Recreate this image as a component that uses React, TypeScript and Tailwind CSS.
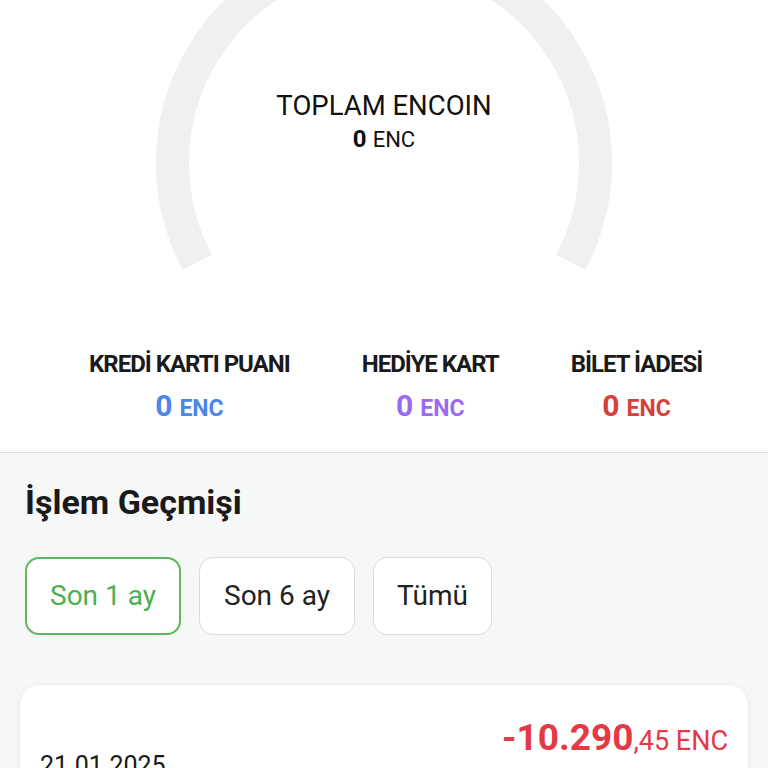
import React from "react";

const cx = 384;
const cy = 163;
const r = 211.5;
const a = (28 * Math.PI) / 180;
const lx = cx - r * Math.cos(a);
const ly = cy + r * Math.sin(a);
const rx = cx + r * Math.cos(a);

function Gauge() {
  return (
    <svg className="absolute left-0 top-0" width="768" height="320" viewBox="0 0 768 320">
      <path
        d={`M ${lx} ${ly} A ${r} ${r} 0 1 1 ${rx} ${ly}`}
        fill="none"
        stroke="#eef1f0"
        strokeWidth="33"
      />
    </svg>
  );
}

function Stat({ label, color }: { label: string; color: string }) {
  return (
    <div className="flex flex-col items-center">
      <div className="text-[24px] font-bold text-[#1a1a1a] tracking-[-1px] leading-none">{label}</div>
      <div className={`mt-[15px] flex items-baseline font-bold leading-none ${color}`}>
        <span className="text-[30px]">0</span>
        <span className="ml-[7px] text-[23px]">ENC</span>
      </div>
    </div>
  );
}

export default function App() {
  return (
    <div className="w-[768px] h-[768px] overflow-hidden bg-[#f6f7f7]" style={{ fontFamily: "Roboto, 'Noto Sans', sans-serif" }}>
      <div className="bg-white border-b border-[#dedede]">
        <div className="relative h-[320px]">
          <Gauge />
          <div className="relative flex flex-col items-center pt-[92px]">
            <div className="text-[27.5px] leading-none text-[#111]">TOPLAM ENCOIN</div>
            <div className="mt-[7px] flex items-baseline leading-none text-[#111]">
              <span className="text-[24px] font-bold">0</span>
              <span className="ml-[6px] text-[22px]">ENC</span>
            </div>
          </div>
        </div>
        <div className="flex items-start h-[132px] pl-[89px] gap-[72px] pt-[32px]">
          <Stat label="KREDİ KARTI PUANI" color="text-[#4a87e6]" />
          <Stat label="HEDİYE KART" color="text-[#9a6af0]" />
          <Stat label="BİLET İADESİ" color="text-[#d6403a]" />
        </div>
      </div>
      <div className="px-[25px] pt-[32px]">
        <div className="text-[34px] font-bold text-[#1a1a1a] leading-none">İşlem Geçmişi</div>
        <div className="mt-[38px] flex gap-[18px]">
          <button className="h-[78px] w-[156px] rounded-[14px] border-2 border-[#5cb85c] bg-white text-[28px] text-[#4caf50]">Son 1 ay</button>
          <button className="h-[78px] w-[156px] rounded-[14px] border border-[#dcdcdc] bg-white text-[28px] text-[#222]">Son 6 ay</button>
          <button className="h-[78px] w-[119px] rounded-[14px] border border-[#dcdcdc] bg-white text-[28px] text-[#222]">Tümü</button>
        </div>
      </div>
      <div className="mx-[20px] mt-[50px] h-[120px] rounded-[20px] bg-white shadow-[0_1px_6px_rgba(0,0,0,0.08)] px-[20px] pt-[34px]">
        <div className="flex justify-between items-start">
          <div className="mt-[34px] text-[25px] leading-none text-[#1a1a1a]">21.01.2025</div>
          <div className="flex items-baseline leading-none text-[#e53945]">
            <span className="text-[37px] font-bold">-10.290</span>
            <span className="text-[27px]">,45 ENC</span>
          </div>
        </div>
      </div>
    </div>
  );
}
